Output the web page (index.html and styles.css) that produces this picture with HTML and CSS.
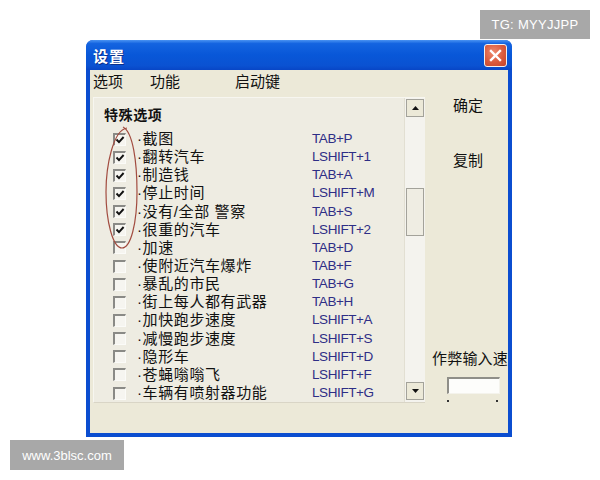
FILE: index.html
```html
<!DOCTYPE html>
<html lang="zh">
<head>
<meta charset="utf-8">
<title>设置</title>
<link rel="stylesheet" href="styles.css">
</head>
<body>
<div class="page">
  <div class="window">
    <div class="titlebar">
      <span class="title">设置</span>
      <span class="close"><svg width="13" height="13" viewBox="0 0 13 13"><path d="M2 2 L11 11 M11 2 L2 11" stroke="#fff" stroke-width="2.4" stroke-linecap="square"/></svg></span>
    </div>
    <div class="client">
      <div class="menu"><span>选项</span><span>功能</span><span>启动键</span></div>
      <div class="main">
        <div class="listbox">
          <div class="list">
            <div class="group">特殊选项</div>
            <div class="row"><span class="cb"><svg viewBox="0 0 10 10"><path d="M1.5 4.5 L4 7.2 L8.6 2" fill="none" stroke="#111" stroke-width="1.9"/></svg></span><span class="label">·截图</span><span class="key">TAB+P</span></div>
            <div class="row"><span class="cb"><svg viewBox="0 0 10 10"><path d="M1.5 4.5 L4 7.2 L8.6 2" fill="none" stroke="#111" stroke-width="1.9"/></svg></span><span class="label">·翻转汽车</span><span class="key">LSHIFT+1</span></div>
            <div class="row"><span class="cb"><svg viewBox="0 0 10 10"><path d="M1.5 4.5 L4 7.2 L8.6 2" fill="none" stroke="#111" stroke-width="1.9"/></svg></span><span class="label">·制造钱</span><span class="key">TAB+A</span></div>
            <div class="row"><span class="cb"><svg viewBox="0 0 10 10"><path d="M1.5 4.5 L4 7.2 L8.6 2" fill="none" stroke="#111" stroke-width="1.9"/></svg></span><span class="label">·停止时间</span><span class="key">LSHIFT+M</span></div>
            <div class="row"><span class="cb"><svg viewBox="0 0 10 10"><path d="M1.5 4.5 L4 7.2 L8.6 2" fill="none" stroke="#111" stroke-width="1.9"/></svg></span><span class="label">·没有/全部 警察</span><span class="key">TAB+S</span></div>
            <div class="row"><span class="cb"><svg viewBox="0 0 10 10"><path d="M1.5 4.5 L4 7.2 L8.6 2" fill="none" stroke="#111" stroke-width="1.9"/></svg></span><span class="label">·很重的汽车</span><span class="key">LSHIFT+2</span></div>
            <div class="row"><span class="cb"></span><span class="label">·加速</span><span class="key">TAB+D</span></div>
            <div class="row"><span class="cb"></span><span class="label">·使附近汽车爆炸</span><span class="key">TAB+F</span></div>
            <div class="row"><span class="cb"></span><span class="label">·暴乱的市民</span><span class="key">TAB+G</span></div>
            <div class="row"><span class="cb"></span><span class="label">·街上每人都有武器</span><span class="key">TAB+H</span></div>
            <div class="row"><span class="cb"></span><span class="label">·加快跑步速度</span><span class="key">LSHIFT+A</span></div>
            <div class="row"><span class="cb"></span><span class="label">·减慢跑步速度</span><span class="key">LSHIFT+S</span></div>
            <div class="row"><span class="cb"></span><span class="label">·隐形车</span><span class="key">LSHIFT+D</span></div>
            <div class="row"><span class="cb"></span><span class="label">·苍蝇嗡嗡飞</span><span class="key">LSHIFT+F</span></div>
            <div class="row"><span class="cb"></span><span class="label">·车辆有喷射器功能</span><span class="key">LSHIFT+G</span></div>
            <svg class="ring" width="38" height="126" viewBox="0 0 38 126"><path d="M24 2 C10 4 3 40 3 66 C3 96 10 122 19 122 C28 122 34 96 34 66 C34 36 30 6 20 1" fill="none" stroke="#a24c40" stroke-width="1.2"/></svg>
          </div>
          <div class="scroll">
            <div class="sbtn"><svg width="7" height="4" viewBox="0 0 7 4"><path d="M0 4 L3.5 0 L7 4 Z" fill="#111"/></svg></div>
            <div class="thumb"></div>
            <div class="track"></div>
            <div class="sbtn"><svg width="7" height="4" viewBox="0 0 7 4"><path d="M0 0 L3.5 4 L7 0 Z" fill="#111"/></svg></div>
          </div>
        </div>
        <div class="side">
          <div class="btn">确定</div>
          <div class="btn btn-copy">复制</div>
          <div class="speed">作弊输入速度</div>
          <div class="slider"><div class="field"></div><div class="ticks"><i></i><i></i></div></div>
        </div>
      </div>
    </div>
  </div>
  <div class="wm wm-tg">TG: MYYJJPP</div>
  <div class="wm wm-site">www.3blsc.com</div>
</div>
</body>
</html>
```
FILE: styles.css
```css
* { box-sizing: border-box; }
html, body { margin: 0; padding: 0; background: #fff; }
.page {
  position: relative;
  width: 600px;
  height: 480px;
  overflow: hidden;
  font-family: "Noto Sans CJK SC", "Liberation Sans", sans-serif;
}
.window {
  margin: 40px 0 0 86px;
  width: 426px;
  height: 397px;
  background: #0b4dd0;
  border-radius: 7px 7px 0 0;
  padding: 0 4px 4px;
  display: flex;
  flex-direction: column;
}
.titlebar {
  height: 30px;
  margin: 0 -4px;
  padding: 0 5px 0 7px;
  border-radius: 7px 7px 0 0;
  background: linear-gradient(#4a93f2 0%, #1464e0 12%, #0857d8 50%, #0a52d2 85%, #0846c6 100%);
  display: flex;
  align-items: center;
  justify-content: space-between;
}
.title {
  color: #fff;
  font-size: 15px;
  font-weight: bold;
  letter-spacing: 1px;
  text-shadow: 1px 1px 0 #0a2f8a;
}
.close {
  width: 23px;
  height: 23px;
  border: 1px solid #f4f0ee;
  border-radius: 3px;
  background: radial-gradient(circle at 40% 35%, #ee8a6e 0%, #da5a3c 55%, #c4442a 100%);
  display: flex;
  align-items: center;
  justify-content: center;
}
.client {
  flex: 1;
  background: #ece9d8;
  display: flex;
  flex-direction: column;
}
.menu {
  height: 22px;
  line-height: 22px;
  padding-left: 3px;
  font-size: 15px;
  color: #111;
  display: grid;
  grid-template-columns: 57px 85px auto;
}
.main {
  margin-top: 5px;
  padding-left: 3px;
  display: flex;
}
.listbox {
  width: 332px;
  height: 306px;
  flex: none;
  display: flex;
  border-top: 1px solid #f7f6f0;
  border-left: 1px solid #f7f6f0;
  border-bottom: 1px solid #d9d5c6;
  background: #eeece2;
}
.list {
  flex: 1;
  position: relative;
}
.group {
  height: 32px;
  line-height: 32px;
  padding-left: 10px;
  font-size: 14px;
  font-weight: bold;
  letter-spacing: 0.6px;
  color: #111;
}
.row {
  height: 18.15px;
  display: flex;
  align-items: center;
  padding-left: 19px;
}
.cb {
  width: 13px;
  height: 13px;
  flex: none;
  background: #f6f5f0;
  border-top: 2px solid #8a8a86;
  border-left: 2px solid #8a8a86;
  border-right: 1px solid #fbfbf8;
  border-bottom: 1px solid #fbfbf8;
  display: flex;
  align-items: center;
  justify-content: center;
}
.cb svg { width: 10px; height: 10px; }
.label {
  width: 175px;
  margin-left: 11px;
  font-family: "Liberation Sans", "Noto Sans CJK SC", sans-serif;
  font-size: 15px;
  letter-spacing: 0.6px;
  line-height: 18px;
  color: #111;
  white-space: nowrap;
}
.key {
  font-family: "Liberation Sans", sans-serif;
  font-size: 13.5px;
  letter-spacing: -0.4px;
  color: #2e2e86;
  line-height: 18px;
}
.ring {
  position: absolute;
  left: 9px;
  top: 28px;
}
.scroll {
  width: 21px;
  display: flex;
  flex-direction: column;
  padding: 1px 1px 2px 1px;
  background: #f4f3ee;
  border-left: 1px solid #e2dfd2;
}
.sbtn {
  width: 18px;
  height: 18px;
  border: 1px solid #a3a29a;
  background: #ece9d8;
  display: flex;
  align-items: center;
  justify-content: center;
}
.thumb {
  width: 18px;
  height: 48px;
  margin-top: 71px;
  border: 1px solid #a3a29a;
  background: #efede3;
}
.track { flex: 1; }
.side {
  flex: 1;
  min-width: 0;
  white-space: nowrap;
  display: flex;
  flex-direction: column;
  font-size: 15px;
  color: #111;
}
.btn {
  line-height: 18px;
  margin-top: -1px;
  margin-left: 28px;
}
.btn-copy { margin-top: 37px; }
.speed {
  margin-top: 180px;
  margin-left: 7px;
  line-height: 18px;
  letter-spacing: 0.2px;
  overflow: hidden;
}
.slider {
  margin-top: 10px;
  margin-left: 22px;
  width: 53px;
}
.field {
  height: 17px;
  background: #fdfdfb;
  border-top: 2px solid #8f8e88;
  border-left: 2px solid #8f8e88;
  border-right: 1px solid #f4f3ec;
  border-bottom: 1px solid #f4f3ec;
}
.ticks {
  display: flex;
  justify-content: space-between;
  padding: 6px 2px 0 0;
}
.ticks i {
  display: block;
  width: 2px;
  height: 2px;
  background: #333;
}
.wm {
  position: absolute;
  background: #a8a8a8;
  color: #fff;
  font-family: "Liberation Sans", sans-serif;
  font-size: 13px;
  display: flex;
  align-items: center;
  justify-content: center;
}
.wm-tg {
  left: 480px;
  top: 10px;
  width: 110px;
  height: 29px;
  letter-spacing: 0.3px;
}
.wm-site {
  left: 10px;
  top: 440px;
  width: 114px;
  height: 30px;
}
```
